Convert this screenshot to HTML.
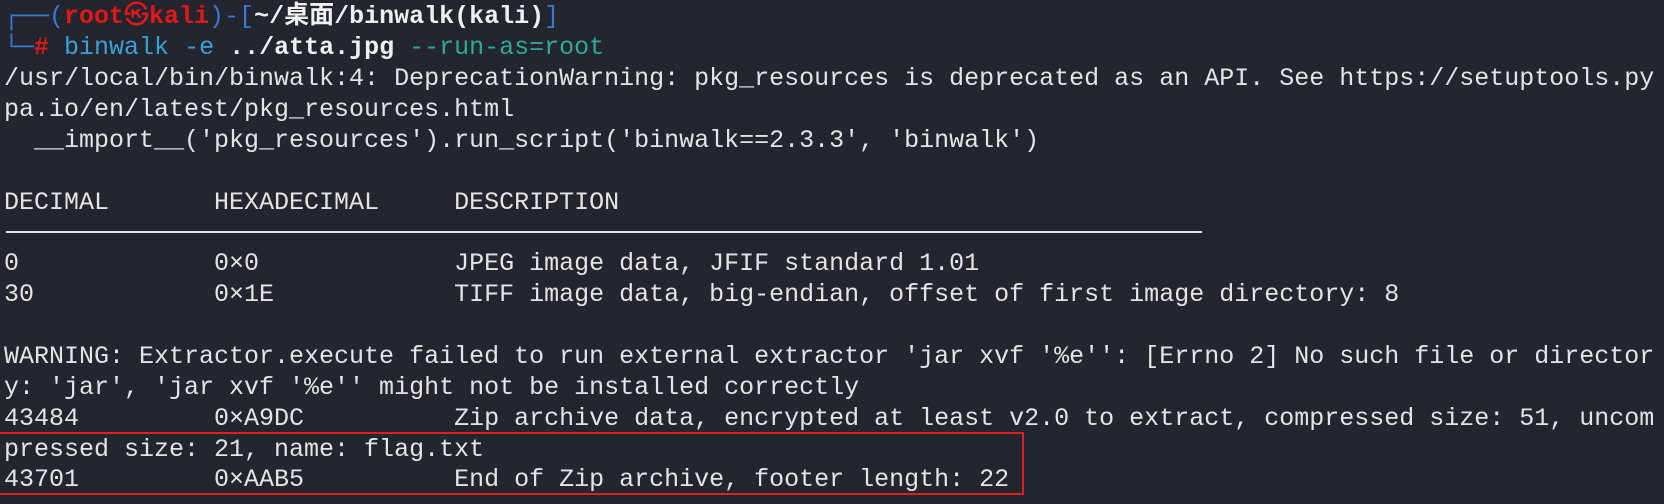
<!DOCTYPE html>
<html><head><meta charset="utf-8"><style>
html,body{margin:0;padding:0;width:1664px;height:504px;overflow:hidden;background:#24262f;}
.l{position:absolute;left:4px;white-space:pre;font-family:"Liberation Mono","Noto Sans CJK SC",monospace;font-size:25px;line-height:31px;color:#e4e4e4;}
.b{color:#3a78d8}.r{color:#e01818;font-weight:bold}.w{color:#f0f0f0;font-weight:bold}.c{color:#3aa0d8}.g{color:#2fa89a}
.rule{position:absolute;left:6px;top:231px;width:1196px;height:2px;background:#e0e0e0}
.box{position:absolute;left:0;top:432px;width:1022px;height:59px;border:2px solid #e02020;border-left:none}
</style></head><body>
<div class="l" style="top:1px"><span class="b">┌──(</span><span class="r">root㉿kali</span><span class="b">)-[</span><span class="w">~/桌面/binwalk(kali)</span><span class="b">]</span></div>
<div class="l" style="top:32px"><span class="b">└─</span><span class="r">#</span> <span class="c">binwalk -e</span> <span class="w">../atta.jpg</span> <span class="g">--run-as=root</span></div>
<div class="l" style="top:63px">/usr/local/bin/binwalk:4: DeprecationWarning: pkg_resources is deprecated as an API. See https://setuptools.py</div>
<div class="l" style="top:94px">pa.io/en/latest/pkg_resources.html</div>
<div class="l" style="top:125px">  __import__('pkg_resources').run_script('binwalk==2.3.3', 'binwalk')</div>
<div class="l" style="top:187px">DECIMAL       HEXADECIMAL     DESCRIPTION</div>
<div class="rule"></div>
<div class="l" style="top:248px">0             0×0             JPEG image data, JFIF standard 1.01</div>
<div class="l" style="top:279px">30            0×1E            TIFF image data, big-endian, offset of first image directory: 8</div>
<div class="l" style="top:341px">WARNING: Extractor.execute failed to run external extractor 'jar xvf '%e'': [Errno 2] No such file or director</div>
<div class="l" style="top:372px">y: 'jar', 'jar xvf '%e'' might not be installed correctly</div>
<div class="l" style="top:403px">43484         0×A9DC          Zip archive data, encrypted at least v2.0 to extract, compressed size: 51, uncom</div>
<div class="l" style="top:434px">pressed size: 21, name: flag.txt</div>
<div class="l" style="top:464px">43701         0×AAB5          End of Zip archive, footer length: 22</div>
<div class="box"></div>
</body></html>
